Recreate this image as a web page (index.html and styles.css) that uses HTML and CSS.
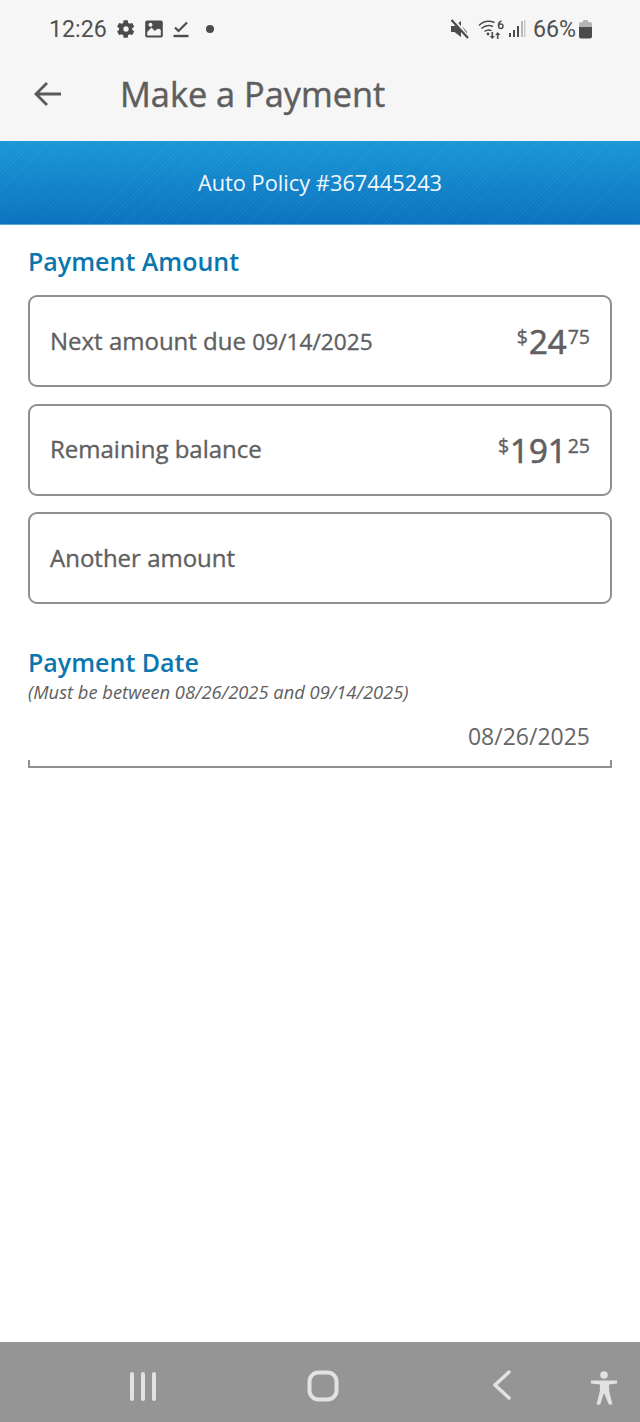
FILE: index.html
```html
<!DOCTYPE html>
<html lang="en">
<head>
<meta charset="utf-8">
<title>Make a Payment</title>
<link rel="stylesheet" href="styles.css">
</head>
<body>
<div class="screen">
  <header class="top">
    <div class="status">
      <div class="status-left">
        <span class="time">12:26</span>
        <svg class="ic" width="20" height="20" viewBox="0 0 24 24"><path fill="#4c4c4c" fill-rule="evenodd" d="M19.4 13c.1-.3.1-.7.1-1s0-.7-.1-1l2.200-1.700c.2-.2.3-.4.1-.7l-2.100-3.600c-.1-.2-.4-.3-.6-.2l-2.600 1c-.5-.4-1.100-.8-1.800-1l-.4-2.700c0-.3-.2-.5-.5-.5h-4.200c-.3 0-.5.2-.5.5l-.4 2.700c-.6.300-1.200.6-1.800 1l-2.600-1c-.2-.1-.5 0-.6.2l-2.100 3.600c-.2.300-.1.500.1.700l2.200 1.700c0 .3-.1.7-.1 1s0 .7.1 1l-2.200 1.700c-.2.200-.3.400-.1.700l2.100 3.600c.1.200.4.300.6.200l2.600-1c.5.400 1.100.8 1.800 1l.4 2.700c0 .3.2.5.5.5h4.200c.3 0 .5-.2.5-.5l.4-2.700c.6-.3 1.200-.6 1.800-1l2.600 1c.2.100.5 0 .6-.2l2.100-3.600c.2-.3.1-.5-.1-.7zM12 15.200a3.200 3.200 0 1 1 0-6.400 3.200 3.200 0 0 1 0 6.400z"/></svg>
        <svg class="ic" width="20" height="20" viewBox="0 0 20 20"><path fill="#4c4c4c" fill-rule="evenodd" d="M3 1.500h14a1.800 1.800 0 0 1 1.800 1.800v13.400a1.800 1.800 0 0 1-1.800 1.800H3a1.800 1.800 0 0 1-1.800-1.800V3.300A1.800 1.800 0 0 1 3 1.500zM3.200 16.500h13.600v-5.500c-1.500-1.500-3-1.500-4.500-.2l-1.500 1.200L7.500 8.500l-4.300 4.500zM6.500 3.800a2 2 0 1 0 0 4 2 2 0 0 0 0-4z"/></svg>
        <svg class="ic" width="18" height="20" viewBox="0 0 18 20"><path fill="none" stroke="#4c4c4c" stroke-width="2.200" d="M3 8.500l3.500 3.500L15 3.500"/><path fill="none" stroke="#4c4c4c" stroke-width="2.400" d="M1.500 17h15"/></svg>
        <span class="dot"></span>
      </div>
      <div class="status-right">
        <svg width="20" height="20" viewBox="0 0 20 20"><path fill="#4c4c4c" d="M1 7h3.500L11 2v16l-6.500-5H1z"/><path fill="#4c4c4c" d="M12 7l5 6v3z"/><path stroke="#f6f6f6" stroke-width="3" d="M3 0l16 19"/><path stroke="#4c4c4c" stroke-width="2.200" d="M1.500 1l16.500 18"/></svg>
        <svg class="wifi" width="27" height="20" viewBox="0 0 27 20"><g fill="none" stroke="#4c4c4c" stroke-width="1.500"><path d="M1 6.500C5 2.500 11 1.500 16.500 3.500"/><path d="M3.500 9.500C7 6.500 11.500 6 15 7.500"/><path d="M6.500 12.500c2-1.500 5-1.800 7-.8"/></g><path fill="#4c4c4c" d="M13.500 13h1.600v4h1.800l-2.600 3-2.600-3h1.800zM20.500 20h-1.600v-4h-1.800l2.600-3 2.600 3h-1.800z"/><circle cx="10" cy="15" r="1.400" fill="#4c4c4c"/><path fill="none" stroke="#4c4c4c" stroke-width="1.500" d="M23.500 2C21.500 2.500 20.500 4 20.500 6.500c0 2 1 3 2.300 3s2.200-1 2.200-2.300-.9-2.200-2.200-2.200-2.300 1-2.300 2.200"/></svg>
        <svg width="18" height="20" viewBox="0 0 18 20"><g fill="#4c4c4c"><rect x="1" y="14" width="2" height="4"/><rect x="5" y="11" width="2" height="7"/><rect x="9" y="7" width="2" height="11"/></g><rect x="13" y="2" width="2" height="16" fill="#b9b9b9"/><rect x="16" y="1" width="1.500" height="17" fill="#c9c9c9"/></svg>
        <span class="pct">66%</span>
        <svg width="13" height="20" viewBox="0 0 13 20"><path fill="#b5b5b5" d="M4 1h5v2h2a2 2 0 0 1 2 2v3H0V5a2 2 0 0 1 2-2h2z"/><path fill="#4c4c4c" d="M0 8h13v9.500a2 2 0 0 1-2 2H2a2 2 0 0 1-2-2z"/></svg>
      </div>
    </div>
    <div class="appbar">
      <svg class="back" width="30" height="30" viewBox="0 0 30 30"><path fill="none" stroke="#5a5a5a" stroke-width="2.800" d="M29 15H4M15 4L4 15l11 11"/></svg>
      <h1 class="title">Make a Payment</h1>
    </div>
  </header>
  <div class="banner">Auto Policy #367445243</div>
  <main class="content">
    <h2 class="heading">Payment Amount</h2>
    <div class="options">
      <div class="option">
        <span class="label">Next amount due <span class="digits">09/14/2025</span></span>
        <span class="amount"><sup class="sym">$</sup><span class="whole">24</span><sup class="cents">75</sup></span>
      </div>
      <div class="option">
        <span class="label">Remaining balance</span>
        <span class="amount"><sup class="sym">$</sup><span class="whole">191</span><sup class="cents">25</sup></span>
      </div>
      <div class="option"><span class="label">Another amount</span></div>
    </div>
    <h2 class="heading date-heading">Payment Date</h2>
    <p class="hint">(Must be between 08/26/2025 and 09/14/2025)</p>
    <div class="date-field">08/26/2025</div>
  </main>
  <nav class="navbar">
    <svg class="nav-recent" width="30" height="30" viewBox="0 0 30 30"><path fill="none" stroke="#e2e2e2" stroke-width="4" stroke-linecap="round" d="M3 3v25M14 3v25M25 3v25"/></svg>
    <svg class="nav-home" width="32" height="32" viewBox="0 0 32 32"><rect x="2.500" y="2.500" width="27" height="27" rx="9" fill="none" stroke="#e2e2e2" stroke-width="4"/></svg>
    <svg class="nav-back" width="20" height="30" viewBox="0 0 20 30"><path fill="none" stroke="#e2e2e2" stroke-width="3.500" stroke-linecap="round" stroke-linejoin="round" d="M17 2L3 15l14 13"/></svg>
    <svg class="nav-a11y" width="28" height="34" viewBox="0 0 28 34"><circle cx="14" cy="4" r="3.800" fill="#e2e2e2"/><path fill="#e2e2e2" d="M1 9.500h26v3l-8 1 .2 7 3.300 13h-3.700L14.500 23h-1L10.200 33.500H6.500l3.300-13 .2-7-9-1z"/></svg>
  </nav>
</div>
</body>
</html>
```
FILE: styles.css
```css
* { box-sizing: border-box; }
html, body { margin: 0; padding: 0; background: #fff; }
.screen {
  width: 640px;
  height: 1422px;
  display: flex;
  flex-direction: column;
  font-family: "Open Sans", "Liberation Sans", sans-serif;
  color: #606060;
}
.top { height: 141px; background: #f6f6f6; flex: none; }
.status {
  height: 60px;
  display: flex;
  align-items: center;
  justify-content: space-between;
  padding: 0 48px 2px 49px;
  font-family: Roboto, "Liberation Sans", sans-serif;
  color: #505050;
}
.status-left, .status-right { display: flex; align-items: center; }
.status-left .time { font-size: 23.200px; margin-right: 9px; }
.status-left .ic { margin-right: 8px; }
.dot { width: 8px; height: 8px; border-radius: 50%; background: #4c4c4c; margin-left: 8px; }
.status-right { gap: 3px; }
.status-right .wifi { margin-left: 5px; }
.pct { font-size: 23.200px; margin-left: 4px; }
.appbar { height: 70px; display: flex; align-items: center; padding-left: 32px; padding-bottom: 2px; }
.back { margin-right: 58px; }
.title { margin: 0; font-size: 34.300px; font-weight: 400; -webkit-text-stroke: 0.45px #5e5e5e; color: #5e5e5e; line-height: 1; }
.banner {
  height: 84px;
  flex: none;
  display: flex;
  align-items: center;
  justify-content: center;
  padding-bottom: 1px;
  color: #f2f8fc;
  font-size: 21.800px;
  background:
    repeating-linear-gradient(135deg, rgba(255,255,255,.03) 0 1px, rgba(0,0,0,.02) 1px 3px),
    linear-gradient(#1a9ad8, #0b73c2);
  border-bottom: 1px solid #5aa5d6;
}
.content { flex: 1; padding: 19px 28px 0; }
.heading { margin: 0; font-size: 25px; font-weight: 600; color: #0a76ae; line-height: 34px; }
.options { margin-top: 17px; display: flex; flex-direction: column; gap: 16.500px; }
.option {
  height: 92px;
  border: 2px solid #8f8f8f;
  border-radius: 9px;
  display: flex;
  align-items: center;
  justify-content: space-between;
  padding: 0 20px;
  font-size: 24px;
  font-weight: 400;
  -webkit-text-stroke: 0.35px #606060;
  color: #606060;
}
.label { margin-bottom: 2px; }
.digits { font-size: 22.700px; }
.amount { display: flex; align-items: flex-start; line-height: 36px; }
.amount sup { vertical-align: baseline; font-size: 19.500px; line-height: 24px; margin-top: 4px; }
.sym { margin-right: 1px; }
.whole { font-size: 33px; -webkit-text-stroke: 0.7px #606060; line-height: 38px; margin: 2px 1px 0 0; }
.date-heading { margin-top: 41px; }
.hint { margin: 1px 0 0; font-size: 18.350px; font-style: italic; color: #606060; line-height: 24px; }
.date-field {
  margin-top: 8px;
  height: 56px;
  padding: 0 22px 6px 0;
  display: flex;
  align-items: center;
  justify-content: flex-end;
  font-size: 23px;
  color: #666;
  position: relative;
  border-bottom: 2px solid #8f8f8f;
}
.date-field::before, .date-field::after {
  content: "";
  position: absolute;
  bottom: 0;
  height: 6px;
  width: 2px;
  background: #8f8f8f;
}
.date-field::before { left: 0; }
.date-field::after { right: 0; }
.navbar { height: 80px; flex: none; background: #959595; position: relative; display: flex; align-items: center; }
.navbar svg { position: absolute; }
.nav-recent { left: 129px; top: 29px; }
.nav-home { left: 307px; top: 28px; }
.nav-back { left: 492px; top: 28px; }
.nav-a11y { left: 590px; top: 29px; }
```
